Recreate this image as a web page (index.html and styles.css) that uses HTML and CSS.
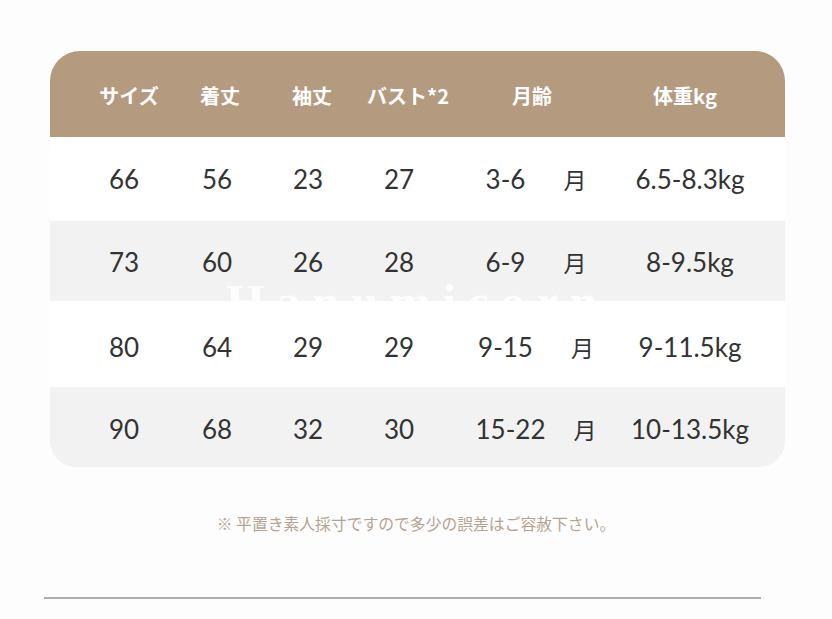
FILE: index.html
```html
<!DOCTYPE html>
<html lang="ja">
<head>
<meta charset="utf-8">
<title>サイズ表</title>
<link rel="stylesheet" href="styles.css">
</head>
<body>
<div class="page">
  <div class="table">
    <div class="head">
      <div>サイズ</div><div>着丈</div><div>袖丈</div><div>バスト*2</div><div>月齢</div><div>体重kg</div>
    </div>
    <div class="row">
      <div>66</div><div>56</div><div>23</div><div>27</div><div class="mon">3-6<span class="m">月</span></div><div>6.5-8.3kg</div>
    </div>
    <div class="row alt">
      <div>73</div><div>60</div><div>26</div><div>28</div><div class="mon">6-9<span class="m">月</span></div><div>8-9.5kg</div>
    </div>
    <div class="row">
      <div>80</div><div>64</div><div>29</div><div>29</div><div class="mon">9-15<span class="m">月</span></div><div>9-11.5kg</div>
    </div>
    <div class="row alt last">
      <div>90</div><div>68</div><div>32</div><div>30</div><div class="mon">15-22<span class="m narrow">月</span></div><div>10-13.5kg</div>
    </div>
    <div class="watermark">Hanumicorn</div>
  </div>
  <p class="note">※ 平置き素人採寸ですので多少の誤差はご容赦下さい。</p>
  <div class="rule"></div>
</div>
</body>
</html>
```

FILE: styles.css
```css
html, body {
  margin: 0;
  padding: 0;
  background: #fdfdfd;
}

.page {
  padding-top: 51px;
}

.table {
  position: relative;
  width: 735px;
  margin-left: 50px;
  border-radius: 30px 30px 26px 26px;
  overflow: hidden;
  background: #ffffff;
}

.head {
  display: grid;
  grid-template-columns: 94px 88px 96px 96px 152px 154px;
  padding: 2px 23px 0 32px;
  height: 86px;
  align-items: center;
  background: #b49a7f;
  color: #ffffff;
  font-family: "Noto Sans CJK JP", "Noto Sans", sans-serif;
  font-weight: 700;
  font-size: 20px;
  text-align: center;
  box-sizing: border-box;
}

.row {
  display: grid;
  grid-template-columns: 94px 92px 90px 92px 182px 126px;
  padding: 0 32px 0 27px;
  box-sizing: border-box;
  height: 84px;
  align-items: center;
  text-align: center;
  font-family: Lato, "Noto Sans CJK JP", sans-serif;
  font-size: 26px;
  color: #333333;
  background: #ffffff;
}

.row:nth-child(3) { height: 80px; padding-top: 1px; }
.row:nth-child(4) { height: 86px; padding-top: 5px; }
.row:nth-child(5) { height: 80px; padding-top: 3px; }

.row.alt {
  background: #f2f2f2;
}

.m {
  margin-left: 38px;
  font-family: "Noto Sans CJK JP", sans-serif;
  font-size: 23px;
}

.m.narrow {
  margin-left: 28px;
}

.watermark {
  position: absolute;
  left: 176px;
  top: 226px;
  font-family: "Liberation Serif", "DejaVu Serif", serif;
  font-size: 50px;
  font-weight: 700;
  letter-spacing: 11px;
  color: rgba(255, 255, 255, 0.8);
  pointer-events: none;
  line-height: 1;
}

.note {
  margin: 47px 0 0;
  text-align: center;
  font-family: "Noto Sans CJK JP", sans-serif;
  font-size: 15.8px;
  line-height: 20px;
  color: #b4a391;
}

.rule {
  width: 717px;
  height: 2px;
  margin: 63px 0 0 44px;
  background: #adadad;
}
```
